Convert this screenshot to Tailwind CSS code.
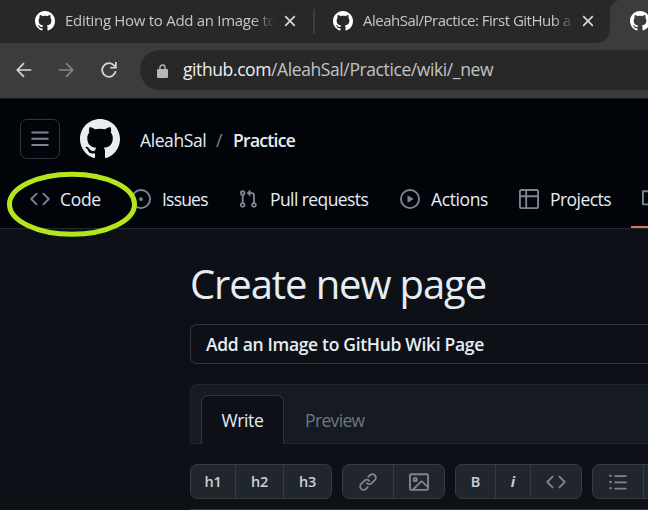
<!DOCTYPE html>
<html lang="en">
<head>
<meta charset="utf-8">
<title>Create new page</title>
<script src="https://cdn.jsdelivr.net/npm/@tailwindcss/browser@4"></script>
</head>
<body class="w-[648px] h-[510px] overflow-hidden bg-[#0d1117] font-['Open_Sans','Noto_Sans',sans-serif] whitespace-nowrap">
<svg class="hidden">
  <symbol id="mark" viewBox="0 0 16 16"><path d="M8 0C3.58 0 0 3.58 0 8c0 3.54 2.29 6.53 5.47 7.59.4.07.55-.17.55-.38 0-.19-.01-.82-.01-1.49-2.01.37-2.53-.49-2.69-.94-.09-.23-.48-.94-.82-1.13-.28-.15-.68-.52-.01-.53.63-.01 1.08.58 1.23.82.72 1.21 1.87.87 2.33.66.07-.52.28-.87.51-1.07-1.78-.2-3.64-.89-3.64-3.95 0-.87.31-1.59.82-2.15-.08-.2-.36-1.02.08-2.12 0 0 .67-.21 2.2.82.64-.18 1.32-.27 2-.27.68 0 1.36.09 2 .27 1.53-1.04 2.2-.82 2.2-.82.44 1.1.16 1.92.08 2.12.51.56.82 1.27.82 2.15 0 3.07-1.87 3.75-3.65 3.95.29.25.54.73.54 1.48 0 1.07-.01 1.93-.01 2.2 0 .21.15.46.55.38A8.013 8.013 0 0016 8c0-4.42-3.58-8-8-8z"/></symbol>
  <symbol id="code" viewBox="0 0 16 16"><path d="m11.28 3.22 4.25 4.25a.75.75 0 0 1 0 1.06l-4.25 4.25a.749.749 0 0 1-1.275-.326.749.749 0 0 1 .215-.734L13.94 8l-3.72-3.72a.749.749 0 0 1 .326-1.275.749.749 0 0 1 .734.215Zm-6.56 0a.751.751 0 0 1 1.042.018.751.751 0 0 1 .018 1.042L2.06 8l3.72 3.72a.749.749 0 0 1-.326 1.275.749.749 0 0 1-.734-.215L.47 8.53a.75.75 0 0 1 0-1.06Z"/></symbol>
  <symbol id="close" viewBox="0 0 12 12"><path d="M1.2 1.2 10.8 10.8M10.8 1.2 1.2 10.8" fill="none" stroke="currentColor" stroke-width="1.7"/></symbol>
</svg>

<!-- Tab strip -->
<div class="h-[43px] w-full flex bg-[#282828] text-[#c4c7c5]">
  <div class="w-[315px] flex items-center pl-[35px]">
    <svg class="size-5 -mt-px fill-white"><use href="#mark"/></svg>
    <div class="ml-[10px] w-[210px] overflow-hidden text-[15px] leading-5 -mt-[3px] tracking-[-0.29px] [mask-image:linear-gradient(to_right,black_188px,transparent_210px)]">Editing How to Add an Image to</div>
    <svg class="ml-[9px] -mt-px size-3 text-[#d5d7d9]"><use href="#close"/></svg>
    <div class="ml-[17px] h-[25px] w-[2px] bg-[#3d3d3d]"></div>
  </div>
  <div class="w-[295px] flex items-center pl-[18px]">
    <svg class="size-5 -mt-px fill-white"><use href="#mark"/></svg>
    <div class="ml-[10px] w-[210px] overflow-hidden text-[15px] leading-5 -mt-[3px] tracking-[-0.5px] [mask-image:linear-gradient(to_right,black_190px,transparent_212px)]">AleahSal/Practice: First GitHub a</div>
    <svg class="ml-[9px] -mt-px size-3 text-[#d5d7d9]"><use href="#close"/></svg>
  </div>
  <div class="relative w-[38px] rounded-tl-[10px] bg-[#3c3c3c] flex items-center pl-[20px]">
    <svg class="absolute -left-[14px] bottom-0 size-[14px] fill-[#3c3c3c]" viewBox="0 0 14 14"><path d="M14 0v14H0A14 14 0 0 0 14 0Z"/></svg>
    <svg class="h-5 w-[18px] -mt-px fill-white" viewBox="0 0 14.4 16"><use href="#mark" width="16" height="16"/></svg>
  </div>
</div>

<!-- Address bar -->
<div class="h-[56px] w-full flex items-center bg-[#3c3c3c] border-b border-[#1c1c1e] pb-[2px] *:shrink-0">
  <svg class="ml-4 size-4 text-[#d5d7d9]" viewBox="0 0 16 16" fill="none" stroke="currentColor" stroke-width="1.7"><path d="M15.3 8H1.7M8 1.2 1.3 8 8 14.8"/></svg>
  <svg class="ml-[26px] size-4 text-[#858585]" viewBox="0 0 16 16" fill="none" stroke="currentColor" stroke-width="1.7"><path d="M.7 8H14.3M8 1.2 14.7 8 8 14.8"/></svg>
  <svg class="ml-[27px] size-4 text-[#d5d7d9]" viewBox="0 0 16 16"><path d="M14.7 9.2A6.8 6.8 0 1 1 13.2 3.6L14.7 5.2" fill="none" stroke="currentColor" stroke-width="1.8"/><path d="M15.7 0v6.6H9.2V4.9H14V0Z" fill="currentColor"/></svg>
  <div class="ml-[23px] h-10 w-[508px] rounded-l-full bg-[#282828] flex items-center pl-[17px]">
    <svg class="h-[14px] w-[11px] mt-[2px] text-[#b4b8bd]" viewBox="0 0 11 14"><path d="M3 6V3.5a2.5 2.5 0 0 1 5 0V6" fill="none" stroke="currentColor" stroke-width="1.4"/><rect y="5" width="11" height="9" rx="1.2" fill="currentColor"/></svg>
    <div class="ml-[15px] text-[17.5px] tracking-[-0.4px] text-[#c1c3c5]"><span class="text-[#eceef0]">github.com</span>/AleahSal/Practice/wiki/_new</div>
  </div>
</div>

<!-- Repository header -->
<header class="h-[130px] w-full bg-[#010409] border-b border-[#25292f]">
  <div class="h-20 flex items-center pl-5 text-[17.5px] text-[#e6edf3]">
    <div class="size-10 rounded-[7px] border border-[#30363d] flex items-center justify-center">
      <svg class="size-5 fill-[#7d8590]" viewBox="0 0 16 16"><path d="M1 2.75A.75.75 0 0 1 1.75 2h12.5a.75.75 0 0 1 0 1.5H1.75A.75.75 0 0 1 1 2.75Zm0 5A.75.75 0 0 1 1.75 7h12.5a.75.75 0 0 1 0 1.5H1.75A.75.75 0 0 1 1 7.75ZM1.75 12h12.5a.75.75 0 0 1 0 1.5H1.75a.75.75 0 0 1 0-1.5Z"/></svg>
    </div>
    <svg class="ml-5 size-10 fill-[#e6edf3]"><use href="#mark"/></svg>
    <div class="ml-5 w-[76px] tracking-[-0.4px] pt-[3px]">AleahSal</div>
    <div class="w-[17px] pt-[3px] text-[#7d8590]">/</div>
    <div class="pt-[3px] font-semibold tracking-[-0.7px]">Practice</div>
  </div>
  <nav class="h-[49px] flex items-center pl-[30px] text-[17.5px] text-[#e6edf3] tracking-[-0.4px]">
    <div class="h-10 mb-[9px] w-[101px] flex shrink-0 items-center gap-[10px] tracking-[-0.3px]"><svg class="size-5 fill-[#7d8590]"><use href="#code"/></svg>Code</div>
    <div class="h-10 mb-[9px] w-[107px] flex shrink-0 items-center gap-[11px] tracking-[-0.8px]"><svg class="size-5 fill-[#7d8590]" viewBox="0 0 16 16"><path d="M8 9.5a1.5 1.5 0 1 0 0-3 1.5 1.5 0 0 0 0 3Z"/><path d="M8 0a8 8 0 1 1 0 16A8 8 0 0 1 8 0ZM1.5 8a6.5 6.5 0 1 0 13 0 6.5 6.5 0 0 0-13 0Z"/></svg>Issues</div>
    <div class="h-10 mb-[9px] w-[162px] flex shrink-0 items-center gap-[12px] tracking-[-0.58px]"><svg class="size-5 fill-[#7d8590]" viewBox="0 0 16 16"><path d="M1.5 3.25a2.25 2.25 0 1 1 3 2.122v5.256a2.251 2.251 0 1 1-1.5 0V5.372A2.25 2.25 0 0 1 1.5 3.25Zm5.677-.177L9.573.677A.25.25 0 0 1 10 .854V2.5h1A2.5 2.5 0 0 1 13.5 5v5.628a2.251 2.251 0 1 1-1.5 0V5a1 1 0 0 0-1-1h-1v1.646a.25.25 0 0 1-.427.177L7.177 3.427a.25.25 0 0 1 0-.354ZM3.75 2.5a.75.75 0 1 0 0 1.5.75.75 0 0 0 0-1.5Zm0 9.5a.75.75 0 1 0 0 1.5.75.75 0 0 0 0-1.5Zm8.25.75a.75.75 0 1 0 1.5 0 .75.75 0 0 0-1.5 0Z"/></svg>Pull requests</div>
    <div class="h-10 mb-[9px] w-[119px] flex shrink-0 items-center gap-[11px]"><svg class="size-5 fill-[#7d8590]" viewBox="0 0 16 16"><path d="M8 0a8 8 0 1 1 0 16A8 8 0 0 1 8 0ZM1.5 8a6.5 6.5 0 1 0 13 0 6.5 6.5 0 0 0-13 0Zm4.879-2.773 4.264 2.559a.25.25 0 0 1 0 .428l-4.264 2.559A.25.25 0 0 1 6 10.559V5.442a.25.25 0 0 1 .379-.215Z"/></svg>Actions</div>
    <div class="h-10 mb-[9px] w-[112px] flex shrink-0 items-center gap-[11px] tracking-[-0.55px]"><svg class="size-5 fill-[#7d8590]" viewBox="0 0 16 16"><path d="M0 1.75C0 .784.784 0 1.75 0h12.5C15.216 0 16 .784 16 1.75v12.5A1.75 1.75 0 0 1 14.25 16H1.75A1.75 1.75 0 0 1 0 14.25ZM6.5 6.5v8h7.75a.25.25 0 0 0 .25-.25V6.5Zm8-1.5V1.75a.25.25 0 0 0-.25-.25H6.5V5Zm-13 1.5v7.75c0 .138.112.25.25.25H5v-8ZM5 5V1.5H1.75a.25.25 0 0 0-.25.25V5Z"/></svg>Projects</div>
    <div class="relative h-[49px] w-[17px] shrink-0 flex items-center pl-[11px] pb-[9px]"><svg class="h-5 w-[6px] shrink-0 fill-[#7d8590]" viewBox="0 0 4.8 16"><path d="M0 1.75A.75.75 0 0 1 .75 1h4.253v1.5H1.5v9h3.757V13H.75a.75.75 0 0 1-.75-.75Z"/></svg>
      <div class="absolute left-0 right-0 bottom-0 h-[2px] bg-[#e0705c]"></div></div>
  </nav>
</header>

<!-- Hand-drawn highlight -->
<svg class="absolute left-[6px] top-[170px] w-[132px] h-[68px]" viewBox="0 0 132 68"><ellipse cx="66" cy="34.3" rx="62.5" ry="30" fill="none" stroke="#b5e61d" stroke-width="5"/></svg>

<main class="pl-[190px] w-full text-[#e6edf3]">
  <h1 class="pt-[27px] h-[95px] text-[40px] leading-[56px] tracking-[-1.1px]">Create new page</h1>
  <div class="h-10 rounded-l-[7px] border border-r-0 border-[#30363d] flex items-center pl-[15px] text-[17.5px] font-semibold tracking-[-0.32px]">Add an Image to GitHub Wiki Page</div>
  <div class="mt-5 h-[60px] rounded-tl-[7px] border border-r-0 border-[#21262d] bg-[#161b22] flex pl-[10px] pt-[10px] text-[17.5px] tracking-[-0.4px]">
    <div class="w-[83px] h-[49px] rounded-t-[7px] border border-b-0 border-[#30363d] bg-[#0d1117] flex justify-center items-center shadow-[0_1px_0_#0d1117]">Write</div>
    <div class="h-[50px] pl-[21px] flex items-center text-[#6e7681] tracking-[-0.65px]">Preview</div>
  </div>
  <div class="mt-5 flex h-[35px] gap-[10px] text-[14.5px] font-semibold text-[#c9d1d9] *:flex *:shrink-0 *:rounded-l-[7px] *:border *:border-[#363b42] *:bg-[#21262d] *:divide-x *:divide-[#363b42]">
    <div class="rounded-r-[7px] *:flex *:items-center *:justify-center tracking-[-0.3px]"><div class="w-[45px]">h1</div><div class="w-[48px]">h2</div><div class="w-[47px]">h3</div></div>
    <div class="rounded-r-[7px] *:flex *:items-center *:justify-center">
      <div class="w-[51px]"><svg class="size-5 fill-[#7d8590]" viewBox="0 0 16 16"><path d="m7.775 3.275 1.25-1.25a3.5 3.5 0 1 1 4.95 4.95l-2.5 2.5a3.5 3.5 0 0 1-4.95 0 .751.751 0 0 1 .018-1.042.751.751 0 0 1 1.042-.018 1.998 1.998 0 0 0 2.83 0l2.5-2.5a2.002 2.002 0 0 0-2.83-2.83l-1.25 1.25a.751.751 0 0 1-1.042-.018.751.751 0 0 1-.018-1.042Zm-4.69 9.64a1.998 1.998 0 0 0 2.83 0l1.25-1.25a.751.751 0 0 1 1.042.018.751.751 0 0 1 .018 1.042l-1.25 1.25a3.5 3.5 0 1 1-4.95-4.95l2.5-2.5a3.5 3.5 0 0 1 4.95 0 .751.751 0 0 1-.018 1.042.751.751 0 0 1-1.042.018 1.998 1.998 0 0 0-2.83 0l-2.5 2.5a1.998 1.998 0 0 0 0 2.83Z"/></svg></div>
      <div class="w-[50px]"><svg class="size-5 fill-[#7d8590]" viewBox="0 0 16 16"><path d="M16 13.25A1.75 1.75 0 0 1 14.25 15H1.75A1.75 1.75 0 0 1 0 13.25V2.75C0 1.784.784 1 1.75 1h12.5c.966 0 1.75.784 1.75 1.75ZM1.75 2.5a.25.25 0 0 0-.25.25v10.5c0 .138.112.25.25.25h.94l.03-.03 6.077-6.078a1.75 1.75 0 0 1 2.412-.06L14.5 10.31V2.75a.25.25 0 0 0-.25-.25Zm12.5 11a.25.25 0 0 0 .25-.25v-.917l-4.298-3.889a.25.25 0 0 0-.344.009L4.81 13.5ZM7 6a2 2 0 1 1-3.999.001A2 2 0 0 1 7 6ZM5.5 6a.5.5 0 1 0-1 0 .5.5 0 0 0 1 0Z"/></svg></div>
    </div>
    <div class="rounded-r-[7px] *:flex *:items-center *:justify-center">
      <div class="w-[40px]">B</div>
      <div class="w-[35px] italic font-bold">i</div>
      <div class="w-[50px]"><svg class="size-5 fill-[#7d8590]"><use href="#code"/></svg></div>
    </div>
    <div class="border-r-0 *:flex *:items-center *:justify-center">
      <div class="w-[51px]"><svg class="size-5 fill-[#7d8590]" viewBox="0 0 16 16"><path d="M5.75 2.5h8.5a.75.75 0 0 1 0 1.5h-8.5a.75.75 0 0 1 0-1.5Zm0 5h8.5a.75.75 0 0 1 0 1.5h-8.5a.75.75 0 0 1 0-1.5Zm0 5h8.5a.75.75 0 0 1 0 1.5h-8.5a.75.75 0 0 1 0-1.5ZM2 14a1 1 0 1 1 0-2 1 1 0 0 1 0 2Zm1-6a1 1 0 1 1-2 0 1 1 0 0 1 2 0ZM2 4a1 1 0 1 1 0-2 1 1 0 0 1 0 2Z"/></svg></div>
      <div class="w-[4px]"></div>
    </div>
  </div>
  <div class="mt-[10px] h-px bg-[#30363d]"></div>
</main>
</body>
</html>
